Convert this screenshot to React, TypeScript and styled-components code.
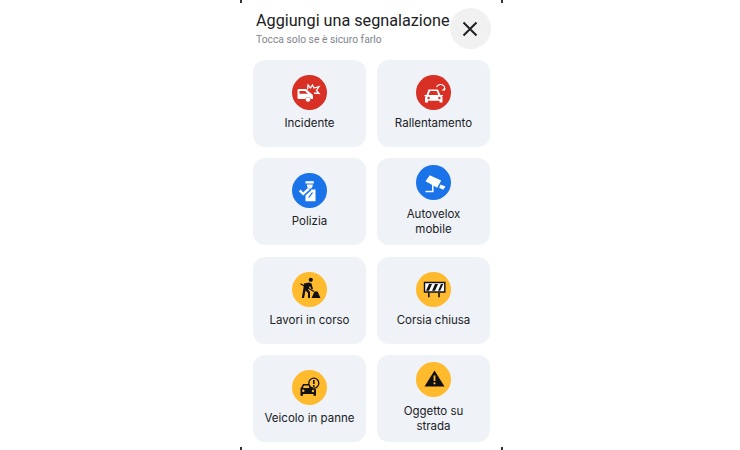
import React from "react";
import styled, { createGlobalStyle } from "styled-components";

const GlobalStyle = createGlobalStyle`
  html, body {
    margin: 0;
    padding: 0;
    background: #ffffff;
  }
`;

const Page = styled.div`
  width: 740px;
  height: 450px;
  box-sizing: border-box;
  overflow: hidden;
  padding-left: 240px;
`;

const Sheet = styled.div`
  position: relative;
  width: 263px;
  height: 450px;
  box-sizing: border-box;
  padding: 8px 13px 0;
`;

const Corner = styled.div<{ $v: "top" | "bottom"; $h: "left" | "right" }>`
  position: absolute;
  ${({ $v }) => $v}: 0;
  ${({ $h }) => $h}: 0;
  width: 2px;
  height: 3px;
  background: #333333;
`;

const Header = styled.div`
  display: flex;
  justify-content: space-between;
  align-items: flex-start;
  height: 52px;
`;

const TitleBlock = styled.div`
  padding: 3px 0 0 3px;
`;

const Title = styled.div`
  font-family: "Roboto", sans-serif;
  font-size: 16.2px;
  line-height: 20px;
  color: #202124;
  white-space: nowrap;
`;

const Subtitle = styled.div`
  font-family: "Roboto", sans-serif;
  font-size: 10.3px;
  line-height: 14px;
  margin-top: 2px;
  color: #80868b;
`;

const CloseButton = styled.div`
  flex: none;
  width: 41px;
  height: 41px;
  border-radius: 50%;
  background: #f1f1f1;
  display: flex;
  align-items: center;
  justify-content: center;
`;

const Grid = styled.div`
  display: grid;
  grid-template-columns: 113px 113px;
  grid-auto-rows: 87px;
  column-gap: 11px;
  row-gap: 11.4px;
`;

const Card = styled.div<{ $tall?: boolean }>`
  background: #eff2f7;
  border-radius: 12px;
  display: flex;
  flex-direction: column;
  align-items: center;
  padding-top: ${({ $tall }) => ($tall ? 7 : 15)}px;
  box-sizing: border-box;
`;

const Badge = styled.div<{ $color: string }>`
  width: 35px;
  height: 35px;
  border-radius: 50%;
  background: ${({ $color }) => $color};
  display: flex;
  align-items: center;
  justify-content: center;
  flex: none;
`;

const Label = styled.div<{ $tall?: boolean }>`
  font-family: "Inter", sans-serif;
  font-size: 11.5px;
  line-height: 15px;
  color: #202124;
  text-align: center;
  margin-top: ${({ $tall }) => ($tall ? 7 : 6)}px;
  max-width: ${({ $tall }) => ($tall ? "72px" : "none")};
`;

const RED = "#d93025";
const BLUE = "#1a73e8";
const YELLOW = "#ffba2e";
const DARK = "#111111";

const CrashIcon = () => (
  <svg width="28" height="28" viewBox="0 0 28 28" fill="none">
    <path d="M3 10h7l5 4.500c1.500.5 2 1.500 2 3V20h-2.200a3 3 0 0 0-5.600 0H3c-1 0-1.500-.5-1.500-1.500v-7C1.500 10.500 2 10 3 10z" fill="#fff" />
    <path d="M3.500 12h5.500l3 2.800H3.500z" fill={RED} />
    <circle cx="12" cy="20.500" r="2.300" fill="#fff" />
    <path d="M11.500 10.500l.5-4.500 2.500 3 2-3 1.500 3 5-1.500-2.500 4 2.500 3-5-.5" stroke="#fff" strokeWidth="1.300" fill="none" />
  </svg>
);

const SlowIcon = () => (
  <svg width="28" height="28" viewBox="0 0 28 28" fill="none">
    <path d="M8.500 10.500h9.500l2.300 5.500h2.700v1.300h-1.300l.8 1.300v4.900h-3v-1.700H8v1.700H5v-4.900l.8-1.300H4.500V16h2z" fill="#fff" />
    <path d="M10 12h6.700l1.600 4H8.500z" fill={RED} />
    <circle cx="8.600" cy="19" r="1.200" fill={RED} />
    <circle cx="19.400" cy="19" r="1.200" fill={RED} />
    <path d="M16.500 8c1.500-3 6-3.500 7.800-.5.800 1.300.5 2.800-.3 3.800" stroke="#fff" strokeWidth="1.200" fill="none" />
    <path d="M21.500 11.500h3.300v-3z" fill="#fff" />
  </svg>
);

const PoliceIcon = () => (
  <svg width="28" height="28" viewBox="0 0 28 28" fill="none">
    <path d="M9.500 4.200h8.300v2.300H9.500z" fill="#fff" />
    <path d="M10.800 7.500h6c0 2.400-1.300 4.200-3 4.200s-3-1.800-3-4.200z" fill="#fff" />
    <path d="M2.800 14.300l1.700-1.700 2.700 2.700 4.900-4.500 1.600 1.700-6.500 6z" fill="#fff" />
    <path d="M15 12.500h4.500v11.700h-10v-5.700l5.500-5z" fill="#fff" />
    <path d="M15.700 15.500h1.500l-3.600 5h-1.500z" fill={BLUE} />
  </svg>
);

const CameraIcon = () => (
  <svg width="28" height="28" viewBox="0 0 28 28" fill="none">
    <path d="M9.800 6.200l11.400 5.300-4 7.300-11.700-6.600z" fill="#fff" />
    <path d="M20.500 15.500l5 2-2.300 3.300-4-2z" fill="#fff" />
    <path d="M12.800 15v7.500H5.500" stroke="#fff" strokeWidth="1.500" fill="none" />
  </svg>
);

const WorkerIcon = () => (
  <svg width="28" height="28" viewBox="0 0 28 28" fill="none">
    <circle cx="14.800" cy="4.800" r="2.100" fill={DARK} />
    <path d="M8 8.500l5-1 2.500 1 1.500 5.500-1.500.5-1.500-3.500-2 3.500 2 2.500v6h-2v-5l-2.500-2.500-1.500 7.500H5.800l2-12z" fill={DARK} />
    <path d="M4.500 8.800l13.500 7.700" stroke={DARK} strokeWidth="1.200" />
    <path d="M15.500 23l3-6.500h3l3 6.500z" fill={DARK} />
  </svg>
);

const BarrierIcon = () => (
  <svg width="28" height="28" viewBox="0 0 28 28" fill="none">
    <path d="M4.500 7.500h20.300v9.500H4.500z" stroke={DARK} strokeWidth="1.400" fill="#fff" />
    <path d="M6 15.800l3-6.800h3l-3 6.800zM12 15.800l3-6.800h3l-3 6.800zM18 15.800l3-6.800h2.200l-3 6.800z" fill={DARK} />
    <path d="M8.800 17.500v4.700M19 17.500v4.700" stroke={DARK} strokeWidth="1.600" />
  </svg>
);

const BrokenCarIcon = () => (
  <svg width="28" height="28" viewBox="0 0 28 28" fill="none">
    <path d="M7 10h6.500c.5 2.500 2.400 4.500 6.500 5.300v6.500h-2.500v-1.800H7v1.800H4.500v-7.500l1-1.300z" fill={DARK} />
    <path d="M7.800 11.600h4.800l.7 2.400H7z" fill={YELLOW} />
    <circle cx="7.300" cy="16.800" r="1.200" fill={YELLOW} />
    <circle cx="17" cy="17" r="1.200" fill={YELLOW} />
    <circle cx="17.800" cy="9.200" r="5" stroke={DARK} strokeWidth="1.300" fill={YELLOW} />
    <path d="M17.800 6v4" stroke={DARK} strokeWidth="1.600" />
    <circle cx="17.800" cy="12" r="1" fill={DARK} />
  </svg>
);

const WarningIcon = () => (
  <svg width="28" height="28" viewBox="0 0 28 28" fill="none">
    <path d="M14.500 4.500L24.500 20.500H4.500z" fill={DARK} />
    <path d="M13.600 9.500h1.800v5.500h-1.800z" fill={YELLOW} />
    <circle cx="14.500" cy="17.300" r="1.100" fill={YELLOW} />
  </svg>
);

const items = [
  { label: "Incidente", color: RED, Icon: CrashIcon },
  { label: "Rallentamento", color: RED, Icon: SlowIcon },
  { label: "Polizia", color: BLUE, Icon: PoliceIcon },
  { label: "Autovelox mobile", color: BLUE, Icon: CameraIcon, tall: true },
  { label: "Lavori in corso", color: YELLOW, Icon: WorkerIcon },
  { label: "Corsia chiusa", color: YELLOW, Icon: BarrierIcon },
  { label: "Veicolo in panne", color: YELLOW, Icon: BrokenCarIcon },
  { label: "Oggetto su strada", color: YELLOW, Icon: WarningIcon, tall: true },
];

const App: React.FC = () => (
  <Page>
    <GlobalStyle />
    <Sheet>
      <Corner $v="top" $h="left" />
      <Corner $v="top" $h="right" />
      <Corner $v="bottom" $h="left" />
      <Corner $v="bottom" $h="right" />
      <Header>
        <TitleBlock>
          <Title>Aggiungi una segnalazione</Title>
          <Subtitle>Tocca solo se è sicuro farlo</Subtitle>
        </TitleBlock>
        <CloseButton>
          <svg width="16" height="16" viewBox="0 0 16 16" fill="none">
            <path d="M1.500 1.500l13 13M14.500 1.500l-13 13" stroke="#202124" strokeWidth="2" />
          </svg>
        </CloseButton>
      </Header>
      <Grid>
        {items.map(({ label, color, Icon, tall }) => (
          <Card key={label} $tall={tall}>
            <Badge $color={color}>
              <Icon />
            </Badge>
            <Label $tall={tall}>{label}</Label>
          </Card>
        ))}
      </Grid>
    </Sheet>
  </Page>
);

export default App;
